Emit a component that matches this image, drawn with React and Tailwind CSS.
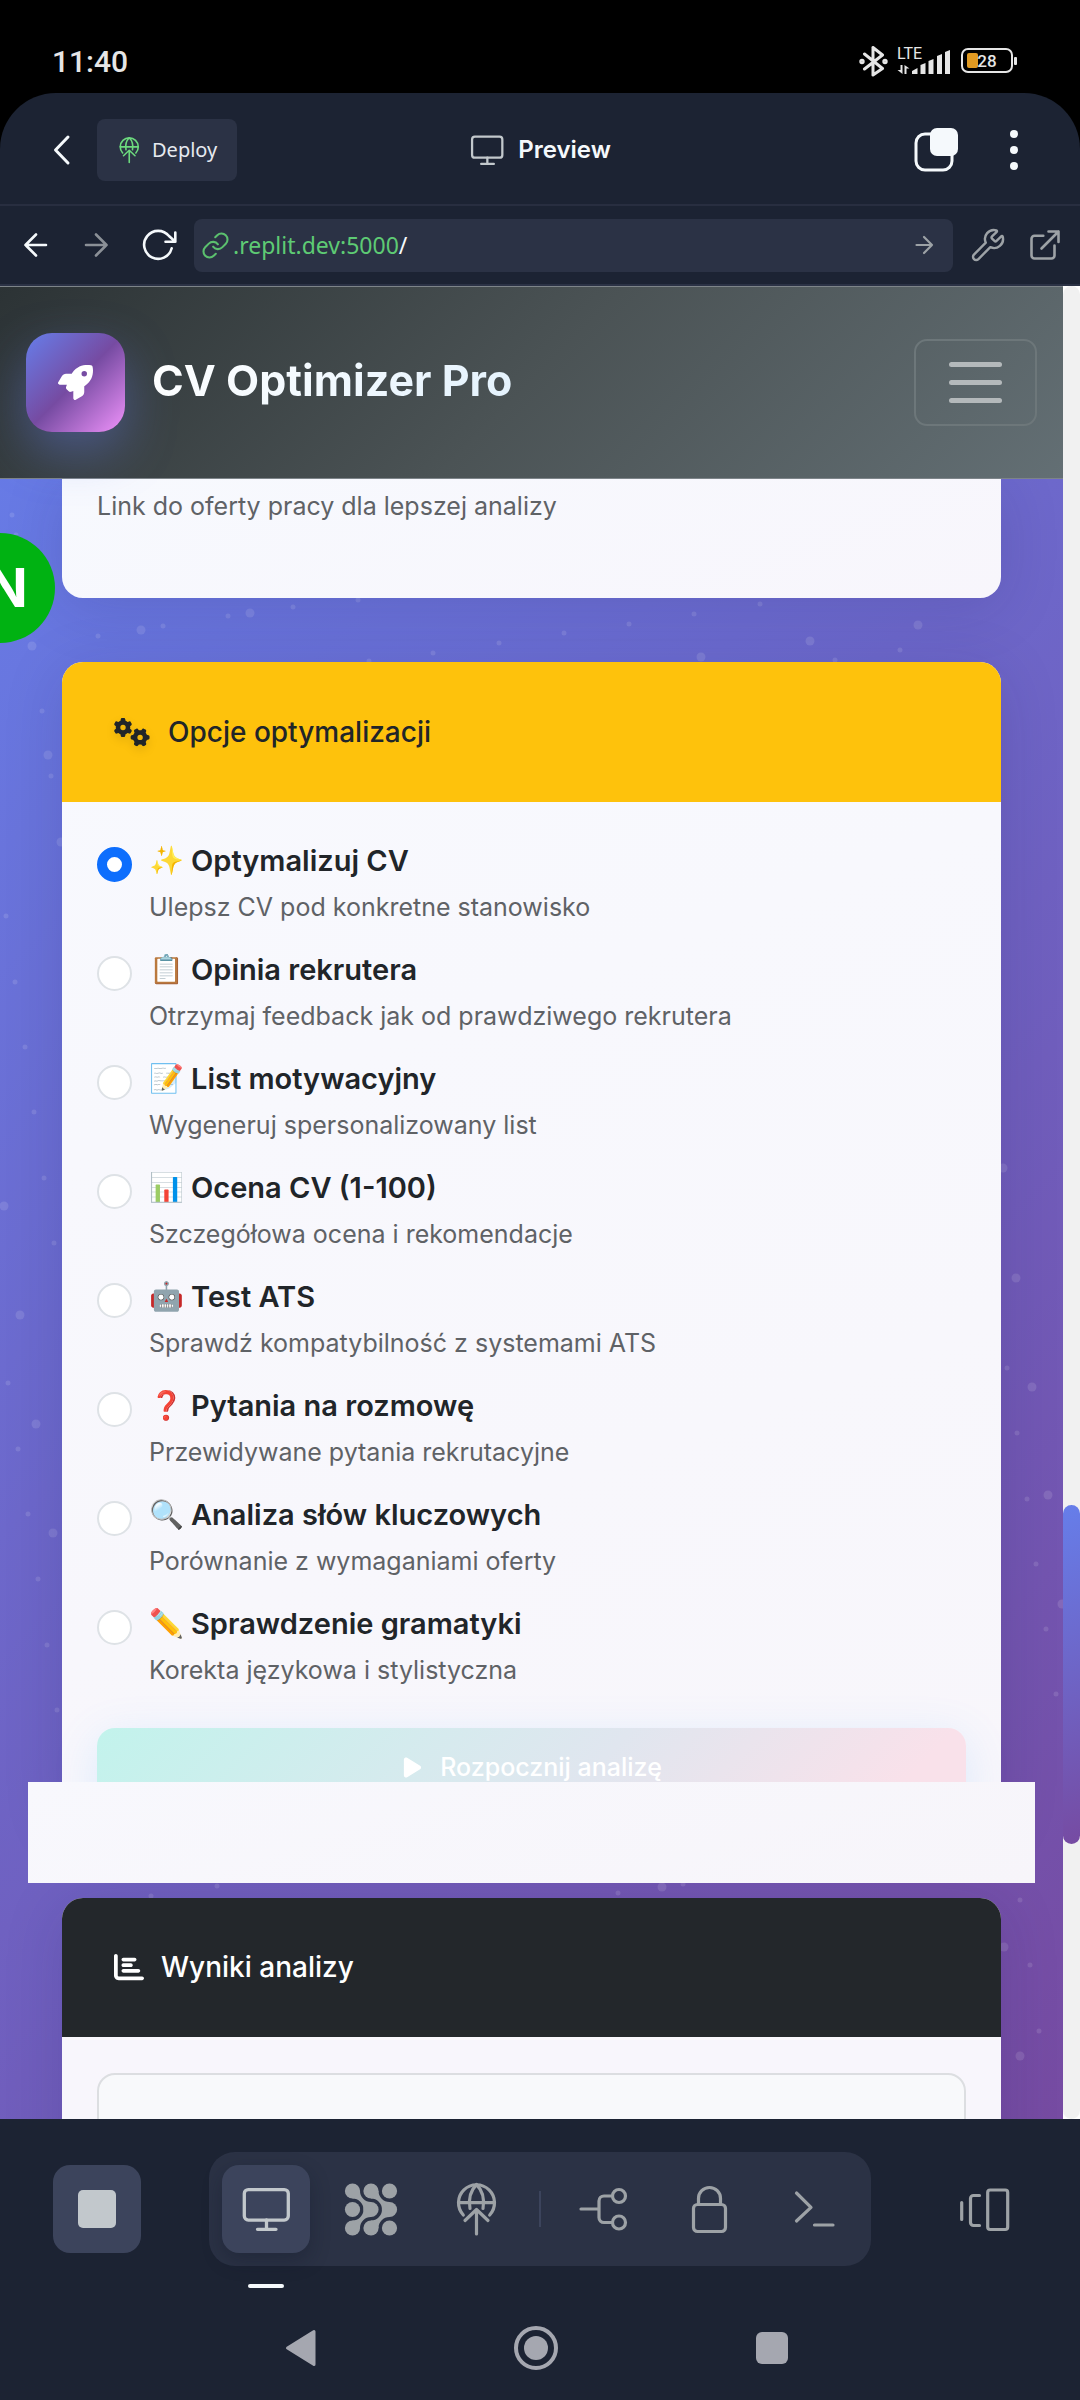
import { useState } from "react";
import { Link, Wrench } from "lucide-react";
import { FaRocket, FaGears, FaChartBar, FaPlay } from "react-icons/fa6";

const options = [
  { id: "optimize", emoji: "✨", title: "Optymalizuj CV", text: "Ulepsz CV pod konkretne stanowisko" },
  { id: "opinion", emoji: "📋", title: "Opinia rekrutera", text: "Otrzymaj feedback jak od prawdziwego rekrutera" },
  { id: "letter", emoji: "📝", title: "List motywacyjny", text: "Wygeneruj spersonalizowany list" },
  { id: "score", emoji: "📊", title: "Ocena CV (1-100)", text: "Szczegółowa ocena i rekomendacje" },
  { id: "ats", emoji: "🤖", title: "Test ATS", text: "Sprawdź kompatybilność z systemami ATS" },
  { id: "questions", emoji: "❓", title: "Pytania na rozmowę", text: "Przewidywane pytania rekrutacyjne" },
  { id: "keywords", emoji: "🔍", title: "Analiza słów kluczowych", text: "Porównanie z wymaganiami oferty" },
  { id: "grammar", emoji: "✏️", title: "Sprawdzenie gramatyki", text: "Korekta językowa i stylistyczna" },
];

const smallStars = [
  [12, 229], [16, 249], [98, 350], [163, 340], [228, 330], [293, 321], [358, 314], [369, 375], [433, 367], [499, 357],
  [564, 347], [629, 338], [694, 328], [760, 318], [835, 374], [900, 364], [42, 425], [51, 490], [6, 630], [15, 696],
  [25, 761], [34, 826], [44, 892], [54, 957], [8, 1097], [18, 1163], [28, 1228], [38, 1293], [47, 1359], [57, 1424],
  [1007, 1082], [1017, 1147], [1027, 1213], [1036, 1278], [1046, 1343], [1056, 1408], [217, 1600], [151, 1610],
  [618, 1607], [683, 1598], [1020, 1614], [1030, 1679], [1039, 1745],
];
const largeStars = [
  [32, 360], [141, 344], [250, 327], [701, 371], [810, 355], [918, 339], [48, 469], [61, 556], [4, 920], [20, 1029],
  [36, 1138], [53, 1247], [1003, 882], [1016, 992], [1032, 1101], [1048, 1209], [1062, 1318], [662, 1601], [1004, 1661],
  [1020, 1770],
];

function Icon({ box = 64, width = 3, className = "", children }) {
  return (
    <svg
      viewBox={`0 0 ${box} ${box}`}
      width={box}
      height={box}
      fill="none"
      stroke="currentColor"
      strokeWidth={width}
      strokeLinecap="round"
      strokeLinejoin="round"
      aria-hidden="true"
      className={`shrink-0 ${className}`}
    >
      {children}
    </svg>
  );
}

function Globe({ size = 64 }) {
  return (
    <svg viewBox="0 0 64 64" width={size} height={size} fill="none" stroke="currentColor" strokeWidth="3.2" strokeLinecap="round" strokeLinejoin="round" aria-hidden="true" className="shrink-0">
      <path d="M19.3 38A18 18 0 1 1 45.7 38" />
      <path d="M14.5 25.7H50.5M32.5 7.5C26 14 24.5 23 26 31.5M32.5 7.5C39 14 40.5 23 39 31.5" />
      <path d="M21 43.5L32.5 32.5L44 43.5M32.5 33V57" />
    </svg>
  );
}

function Monitor({ size = 64 }) {
  return (
    <svg viewBox="0 0 64 64" width={size} height={size} fill="none" stroke="currentColor" strokeWidth="3.3" strokeLinecap="round" strokeLinejoin="round" aria-hidden="true" className="shrink-0">
      <rect x="10.3" y="12.6" width="44" height="30.5" rx="4" />
      <path d="M32.5 43V52M23.5 52.3H42" />
    </svg>
  );
}

function StatusBar() {
  return (
    <div className="flex h-[93px] shrink-0 items-center justify-between bg-black pl-[52px] pr-[63px] text-[#e6e6e6]">
      <time className="mt-[30px] font-['Roboto'] text-[30px] font-medium leading-none">11:40</time>
      <div className="mt-[28px] flex items-center">
        <Icon box={32} width={3}>
          <path d="M16 2.5V30M16 2.5L25.5 10L7.5 24M7.5 9L25.5 23.5L16 30" />
          <circle cx="5" cy="16.5" r="1.2" />
          <circle cx="28" cy="16.5" r="1.2" />
        </Icon>
        <div className="relative ml-[8px] h-[28px] w-[54px]">
          <span className="absolute left-0 top-0 font-['Roboto'] text-[16px] leading-[13px]">LTE</span>
          <svg width="54" height="28" viewBox="0 0 54 28" fill="currentColor" aria-hidden="true">
            <path d="M3.5 18H5.5V27L0.5 23H3.5ZM7.5 27V18L12.5 21.5H9.5V27Z" />
            <path d="M15 27V24L20.5 21V27ZM23.5 27V18L28.5 16V27ZM31.5 27V14L36.5 12V27ZM40 27V9L45 7V27ZM48 27V5L53 3V27Z" />
          </svg>
        </div>
        <div className="ml-[10px] flex items-center gap-px">
          <div className="relative flex h-[25px] w-[52px] items-center justify-center rounded-[7px] border-2 border-[#e6e6e6] font-['Roboto'] text-[17px] font-medium leading-none">
            <span className="absolute left-[4px] top-[3px] h-[15px] w-[11px] rounded-[2px] bg-[#e09a22]" />
            <span className="relative mt-[2px]">28</span>
          </div>
          <span className="h-[8px] w-[3px] rounded-[1px] bg-[#e6e6e6]" />
        </div>
      </div>
    </div>
  );
}

function AppHeader() {
  return (
    <div className="bg-black">
      <header className="grid h-[113px] grid-cols-[1fr_auto_1fr] items-center rounded-t-[56px] border-b-2 border-[#282e40] bg-[#1c2333] pl-[42px] pr-[46px] pt-[2px] text-[#f5f9fc]">
        <div className="flex items-center gap-[15px]">
          <button type="button" aria-label="Wstecz">
            <Icon box={40}>
              <path d="M26 7L13.5 20L26 33" />
            </Icon>
          </button>
          <button type="button" className="flex h-[62px] items-center gap-[7px] rounded-lg bg-[#2b3245] pl-4 pr-5">
            <span className="text-[#6cd97e]">
              <Globe size={32} />
            </span>
            <span className="font-['Noto_Sans'] text-[20px] leading-none text-[#e6eaf0]">Deploy</span>
          </button>
        </div>
        <h1 className="flex items-center gap-[9px] font-['Inter'] text-[24px] font-semibold leading-none">
          <span className="text-[#c2c8cc]">
            <Monitor size={44} />
          </span>
          Preview
        </h1>
        <div className="flex items-center justify-end gap-[36px]">
          <button type="button" aria-label="Karty">
            <Icon box={44}>
              <rect x="2" y="6" width="36" height="36" rx="9" />
              <rect x="16" y="0" width="28" height="28" rx="7" fill="currentColor" stroke="none" />
            </Icon>
          </button>
          <button type="button" aria-label="Menu" className="flex h-11 w-10 flex-col items-center justify-between py-[2px]">
            <span className="size-2 rounded-full bg-current" />
            <span className="size-2 rounded-full bg-current" />
            <span className="size-2 rounded-full bg-current" />
          </button>
        </div>
      </header>
    </div>
  );
}

function AddressBar() {
  return (
    <nav className="flex h-[80px] shrink-0 items-center border-b-2 border-[#2b3245] bg-[#1c2333] pl-[16px] pr-[16px] text-[#f5f9fc]">
      <button type="button" aria-label="Poprzednia strona">
        <Icon box={40} width={2.6}>
          <path d="M30 20H9.5M20 9.5L9.5 20L20 30.5" />
        </Icon>
      </button>
      <button type="button" aria-label="Następna strona" className="ml-[20px] text-[#8b9097]">
        <Icon box={40} width={2.6}>
          <path d="M10 20H30.5M20 9.5L30.5 20L20 30.5" />
        </Icon>
      </button>
      <button type="button" aria-label="Odśwież" className="ml-[24px]">
        <Icon box={40} width={2.6}>
          <path d="M31.7 23.3A14 14 0 1 1 29 11L35.3 16.7M35.3 7.5V16.7H25.5" />
        </Icon>
      </button>
      <div className="ml-[14px] flex h-[53px] min-w-0 flex-1 items-center rounded-lg bg-[#2b3245] pl-[7px] pr-[11px] font-['Noto_Sans'] text-[23px] leading-none">
        <Link size={29} strokeWidth={1.7} className="shrink-0 text-[#5bc06e]" aria-hidden="true" />
        <a href="#preview" className="ml-[3px] flex-1 text-[#5ecb74]">
          .replit.dev:5000<span className="text-[#f5f9fc]">/</span>
        </a>
        <button type="button" aria-label="Przejdź" className="text-[#9da2a6]">
          <Icon box={36} width={2.2}>
            <path d="M10.5 18H26M18 10L26 18L18 26" />
          </Icon>
        </button>
      </div>
      <button type="button" aria-label="Narzędzia" className="ml-[17px] text-[#9da2a6]">
        <Wrench size={36} strokeWidth={1.6} />
      </button>
      <button type="button" aria-label="Otwórz w nowej karcie" className="ml-[18px] text-[#9da2a6]">
        <Icon box={40} width={2.6}>
          <path d="M19.3 10.7H10.5A3 3 0 0 0 7.5 13.7V30.5A3 3 0 0 0 10.5 33.5H27.5A3 3 0 0 0 30.5 30.5V20.5" />
          <path d="M17.5 23.5L34.5 6.5M24.5 6.5H34.5V17" />
        </Icon>
      </button>
    </nav>
  );
}

function SiteNav() {
  return (
    <div className="relative z-10 flex h-[193px] items-center justify-between border-y border-[#7d8489] bg-linear-[135deg,#2c3335_0%,#4b5355_50%,#636f74_100%] pl-[26px] pr-[26px]">
      <a href="#home" className="flex items-center gap-[27px]">
        <span className="flex size-[99px] items-center justify-center rounded-[26px] bg-linear-[135deg,#667eea_0%,#764ba2_50%,#f093fb_100%] text-white shadow-[0_20px_50px_rgba(102,126,234,0.4)]">
          <FaRocket size={35} aria-hidden="true" />
        </span>
        <span className="bg-linear-[135deg,#ffffff_0%,#e3f2fd_100%] bg-clip-text pb-[6px] font-['Inter'] text-[43px] font-bold leading-[60px] text-transparent">
          CV Optimizer Pro
        </span>
      </a>
      <button type="button" aria-label="Nawigacja" className="flex h-[87px] w-[123px] flex-col items-center justify-center gap-[13px] rounded-[13px] border-2 border-[#6d777a]">
        <span className="h-[5px] w-[53px] rounded-full bg-[#b4b9bb]" />
        <span className="h-[5px] w-[53px] rounded-full bg-[#b4b9bb]" />
        <span className="h-[5px] w-[53px] rounded-full bg-[#b4b9bb]" />
      </button>
    </div>
  );
}

function Starfield() {
  return (
    <svg className="absolute inset-0 h-full w-full" aria-hidden="true">
      {smallStars.map(([x, y]) => (
        <circle key={`${x}-${y}`} cx={x} cy={y} r="2.5" fill="#ffffff" opacity="0.12" />
      ))}
      {largeStars.map(([x, y]) => (
        <circle key={`${x}-${y}`} cx={x} cy={y} r="4.5" fill="#ffffff" opacity="0.12" />
      ))}
    </svg>
  );
}

function OptionsCard() {
  const [selected, setSelected] = useState("optimize");
  return (
    <section className="mx-[62px] mt-[64px] rounded-t-[21px] bg-linear-[160deg,#f8f9fe,#f8f6fb] shadow-[0_10px_60px_rgba(30,30,90,0.15)]">
      <h2 className="flex h-[140px] items-center gap-[18px] rounded-t-[21px] bg-[#fec20c] pl-[52px] text-[28px] font-medium leading-none text-[#212529]">
        <FaGears size={36} aria-hidden="true" className="drop-shadow-[0_4px_4px_rgba(0,0,0,0.1)]" />
        Opcje optymalizacji
      </h2>
      <fieldset className="flex flex-col gap-[19px] px-[35px] pt-[38px]">
        {options.map((o) => (
          <label key={o.id} className="flex h-[90px] gap-[17px]">
            <input
              type="radio"
              name="mode"
              value={o.id}
              checked={selected === o.id}
              onChange={() => setSelected(o.id)}
              className="mt-[7px] size-[35px] shrink-0 appearance-none rounded-full border-2 border-[#dee2e6] bg-white checked:border-[10px] checked:border-[#0d6efd]"
            />
            <span className="flex flex-col">
              <span className="flex items-center gap-[8px] text-[29px] font-semibold leading-[42px] text-[#212529]">
                <span className="w-[34px] font-['Noto_Color_Emoji'] text-[28px]">{o.emoji}</span>
                {o.title}
              </span>
              <span className="mt-[6px] text-[25px] leading-[39px] text-[#5f6266]">{o.text}</span>
            </span>
          </label>
        ))}
      </fieldset>
      <div className="px-[35px] pt-[35px]">
        <button
          type="button"
          className="-mb-[34px] flex h-[88px] w-full items-center justify-center gap-[16px] rounded-[18px] bg-linear-[135deg,#c2f3ec_0%,#e0e6ef_56%,#f9e1ea_90%] pb-[9px] text-[25px] font-medium text-white shadow-[0_10px_45px_rgba(79,172,254,0.16)]"
        >
          <FaPlay size={23} aria-hidden="true" />
          Rozpocznij analizę
        </button>
      </div>
    </section>
  );
}

function Preview() {
  return (
    <div id="preview" className="flex min-h-0 flex-1 overflow-hidden bg-white">
      <div className="relative min-w-0 flex-1 overflow-hidden bg-linear-[135deg,#667eea,#764ba2] font-['Inter']">
        <Starfield />
        <SiteNav />
        <main className="relative">
          <section className="mx-[62px] h-[119px] rounded-b-[21px] bg-linear-[160deg,#f7f9fe,#f8f6fc] px-[35px] pt-[8px] shadow-[0_10px_60px_rgba(30,30,90,0.15)]">
            <p className="text-[25px] leading-[38px] text-[#5f6266]">Link do oferty pracy dla lepszej analizy</p>
          </section>
          <OptionsCard />
          <div className="relative mx-[28px] h-[101px] bg-linear-[160deg,#f8f8fd,#f7f5fa]" />
          <section className="mx-[62px] mt-[15px] rounded-t-[21px] bg-[#f8f6fc] shadow-[0_10px_60px_rgba(30,30,90,0.15)]">
            <h2 className="flex h-[139px] items-center gap-[17px] rounded-t-[21px] bg-[#23272b] pb-[2px] pl-[52px] text-[28px] font-medium leading-none text-white">
              <FaChartBar size={30} aria-hidden="true" />
              Wyniki analizy
            </h2>
            <div className="px-[35px] pt-[36px]">
              <output className="block h-[300px] rounded-[18px] border-2 border-[#dcdee1] bg-[#f8f9fb]" />
            </div>
          </section>
        </main>
        <button
          type="button"
          aria-label="Profil"
          className="absolute -left-[55px] top-[247px] flex size-[110px] items-center justify-center rounded-full bg-[#00b212] pl-[14px] text-[54px] font-bold leading-none text-white"
        >
          N
        </button>
      </div>
      <div className="w-[17px] shrink-0 rounded-full bg-[#f1f1f1] pt-[1219px]">
        <div className="h-[339px] rounded-full bg-linear-[160deg,#667eea,#764ba2]" />
      </div>
    </div>
  );
}

function Tool({ label, active = false, children }) {
  return (
    <button
      type="button"
      aria-label={label}
      className={
        active
          ? "flex size-[88px] items-center justify-center rounded-[17px] bg-[#3c445c] text-[#c2c8cc] shadow-[0_8px_20px_rgba(14,20,35,0.3)]"
          : "flex size-[88px] items-center justify-center rounded-[17px] text-[#9da2a6]"
      }
    >
      {children}
    </button>
  );
}

function BottomBar() {
  return (
    <footer className="relative shrink-0 bg-[#1c2333] pb-[29px] pt-[33px]">
      <div className="flex items-center justify-between pl-[53px] pr-[53px]">
        <button type="button" aria-label="Zatrzymaj" className="flex size-[88px] items-center justify-center rounded-[17px] bg-[#3c445c]">
          <span className="size-[38px] rounded-[5px] bg-[#c2c8cc]" />
        </button>
        <div className="flex items-center gap-[17px] rounded-[26px] bg-[#2b3245] p-[13px]">
          <Tool label="Podgląd" active>
            <Monitor />
          </Tool>
          <Tool label="Agent">
            <svg viewBox="0 0 64 64" width="64" height="64" fill="currentColor" aria-hidden="true">
              {[13.5, 32, 50.5].map((x) => [14, 32.5, 51].map((y) => <circle key={`${x}-${y}`} cx={x} cy={y} r="7.6" />))}
              {[0, 18.5].map((dx) => (
                <g key={dx} transform={`translate(${dx} 0)`}>
                  <path d="M13.5 21.6A11 11 0 0 1 24.5 32.5H32V25A11 11 0 0 1 21 14H13.5Z" />
                  <path d="M32 40A11 11 0 0 0 21 51H13.5V43.4A11 11 0 0 0 24.5 32.5H32Z" />
                </g>
              ))}
            </svg>
          </Tool>
          <Tool label="Wdrożenia">
            <Globe />
          </Tool>
          <span className="mx-[2px] h-[36px] w-[2px] bg-[#3c445c]" />
          <Tool label="Git">
            <Icon width={3.2}>
              <path d="M9 32H27M39.5 19H32A5 5 0 0 0 27 24V40.5A5 5 0 0 0 32 45.5H39.5" />
              <circle cx="47" cy="19" r="6.5" />
              <circle cx="47" cy="45.5" r="6.5" />
            </Icon>
          </Tool>
          <Tool label="Sekrety">
            <Icon width={3.2}>
              <rect x="16.5" y="27.5" width="32" height="27" rx="4" />
              <path d="M21.5 27V21.5A11 11 0 0 1 43.5 21.5V27" />
            </Icon>
          </Tool>
          <Tool label="Terminal">
            <Icon width={3.2}>
              <path d="M14.5 16L29 30.3L14.5 44M32.5 48H51" />
            </Icon>
          </Tool>
        </div>
        <button type="button" aria-label="Przełącz karty" className="flex size-[88px] items-center justify-center text-[#9da2a6]">
          <Icon width={3.2}>
            <path d="M10.7 25.5V42.5M28.5 18.5H22.5A3 3 0 0 0 19.5 21.5V45.5A3 3 0 0 0 22.5 48.5H28.5" />
            <rect x="36.7" y="13" width="20" height="39.5" rx="2.5" />
          </Icon>
        </button>
      </div>
      <div className="ml-[248px] mt-[18px] h-[4px] w-[36px] rounded-full bg-[#f5f9fc]" />
      <div className="mt-[37px] flex items-center justify-between pl-[277px] pr-[285px] text-[#a5a7b0]">
        <button type="button" aria-label="Wróć">
          <Icon box={46} width={3}>
            <path d="M10.5 23L37 6.5V39.5Z" fill="currentColor" />
          </Icon>
        </button>
        <button type="button" aria-label="Ekran główny">
          <Icon box={46} width={4}>
            <circle cx="23" cy="23" r="20" />
            <circle cx="23" cy="23" r="12" fill="currentColor" stroke="none" />
          </Icon>
        </button>
        <button type="button" aria-label="Ostatnie aplikacje">
          <Icon box={46}>
            <rect x="7" y="7" width="32" height="32" rx="6" fill="currentColor" stroke="none" />
          </Icon>
        </button>
      </div>
    </footer>
  );
}

export default function App() {
  return (
    <div className="flex h-screen flex-col overflow-hidden bg-[#1c2333] font-['Inter',sans-serif]">
      <StatusBar />
      <AppHeader />
      <AddressBar />
      <Preview />
      <BottomBar />
    </div>
  );
}
